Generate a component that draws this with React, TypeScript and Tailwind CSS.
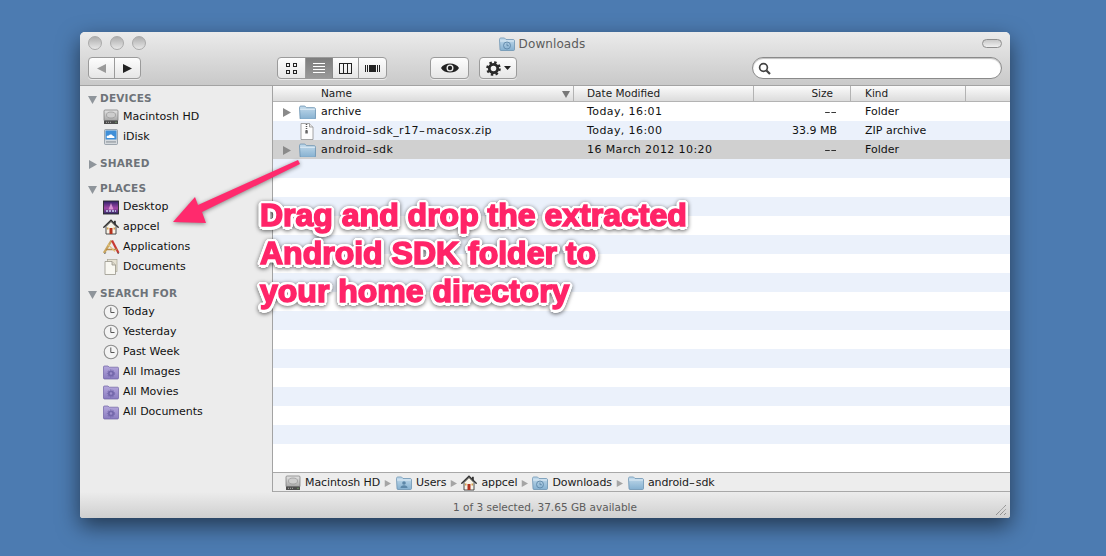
import React from "react";

const Folder = ({ size = 16, glyph }: { size?: number; glyph?: "clock" | "user" }) => (
  <svg width={size} height={size * 14 / 16} viewBox="0 0 16 14" className="shrink-0">
    <defs>
      <linearGradient id="fg" x1="0" y1="0" x2="0" y2="1">
        <stop offset="0" stopColor="#c3dbec" />
        <stop offset="1" stopColor="#85b0d0" />
      </linearGradient>
    </defs>
    <path d="M.5 2.500c0-1 .5-1.500 1.500-1.500h3.500l1.500 1.500h7c1 0 1.500.5 1.500 1.500v8.500c0 .6-.4 1-1 1h-12.500c-.6 0-1-.4-1-1z" fill="url(#fg)" stroke="#6d94b2" strokeWidth=".8" />
    <path d="M1 4h14" stroke="#e8f2f9" strokeWidth=".8" />
    {glyph === "clock" && <g fill="none" stroke="#5d87a8" strokeWidth=".9"><circle cx="8" cy="8.500" r="3.500" /><path d="M8 6.500v2.200h1.800" /></g>}
    {glyph === "user" && <g fill="#5d87a8"><circle cx="8" cy="7" r="1.800" /><path d="M4.500 12c0-2 1.500-2.800 3.500-2.800s3.500.8 3.500 2.800z" /></g>}
  </svg>
);

const Drive = () => (
  <svg width="16" height="16" viewBox="0 0 16 16" className="shrink-0">
    <defs>
      <linearGradient id="dg" x1="0" y1="0" x2="0" y2="1">
        <stop offset="0" stopColor="#e4e4e4" />
        <stop offset="1" stopColor="#a5a5a5" />
      </linearGradient>
    </defs>
    <rect x="1" y="1" width="14" height="11" rx="1" fill="url(#dg)" stroke="#777" strokeWidth=".7" />
    <ellipse cx="8" cy="6" rx="4.500" ry="3" fill="#cdcdcd" stroke="#8b8b8b" strokeWidth=".6" />
    <rect x="1" y="11.500" width="14" height="3.500" rx=".6" fill="#4d4d4d" />
    <path d="M3 13.300h1M5 13.300h1M7 13.300h1" stroke="#c7c7c7" strokeWidth=".8" />
    <path d="M12.500 13.300h1" stroke="#8fdc7e" strokeWidth=".9" />
  </svg>
);

const IDisk = () => (
  <svg width="16" height="16" viewBox="0 0 16 16" className="shrink-0">
    <rect x="1.500" y=".5" width="13" height="15" rx="1" fill="#d5d9dd" stroke="#7f8b96" strokeWidth=".7" />
    <rect x="2.500" y="1.500" width="11" height="9" fill="#3f8fd8" />
    <path d="M4 9c-1.200-1.600.6-3 1.800-2.300.6-1.800 3.800-1.600 4.100.4 1.500-.1 2.100 1.100 1.300 1.900z" fill="#fff" />
    <rect x="3" y="12" width="10" height="1.800" fill="#a8aeb4" />
  </svg>
);

const Desktop = () => (
  <svg width="16" height="15" viewBox="0 0 16 15" className="shrink-0">
    <defs>
      <linearGradient id="dk" x1="0" y1="0" x2="0" y2="1">
        <stop offset="0" stopColor="#2c1f66" />
        <stop offset=".55" stopColor="#a348a8" />
        <stop offset="1" stopColor="#2e2a63" />
      </linearGradient>
    </defs>
    <rect x=".5" y="1" width="15" height="13" fill="url(#dk)" stroke="#2a2a2a" strokeWidth=".9" />
    <path d="M8 3l2.500 6.500h-5z" fill="#e9a9de" opacity=".8" />
    <path d="M3 11h10" stroke="#c9d5f5" strokeWidth="1.600" strokeDasharray="2 1" />
  </svg>
);

const Home = () => (
  <svg width="16" height="16" viewBox="0 0 16 16" className="shrink-0">
    <path d="M3 7.500v7.500h10v-7.500L8 2.500z" fill="#f7f3e8" stroke="#3a3a3a" strokeWidth=".9" />
    <path d="M.8 8.300L8 1.200l7.200 7.100" fill="none" stroke="#333" strokeWidth="1.400" strokeLinecap="round" />
    <rect x="11" y="1.800" width="1.800" height="3.500" fill="#333" />
    <rect x="6.500" y="9" width="3" height="6" fill="#b3331e" />
    <rect x="4" y="8.500" width="1.500" height="2" fill="#d6a24a" />
    <rect x="10.500" y="8.500" width="1.500" height="2" fill="#d6a24a" />
  </svg>
);

const Apps = () => (
  <svg width="17" height="16" viewBox="0 0 17 16" className="shrink-0">
    <path d="M1 14L8.500 1.500" stroke="#c8a661" strokeWidth="2.400" />
    <path d="M9 1.500L15.500 14" stroke="#c83a32" strokeWidth="2.200" />
    <path d="M3 10.500h11" stroke="#b98a4a" strokeWidth="1.700" />
    <path d="M1.500 15l1.200-1.500M15.500 15l-.8-1.500" stroke="#555" strokeWidth="1" />
    <path d="M5 5.500l7 7" stroke="#e3c37c" strokeWidth="1.100" />
  </svg>
);

const Doc = () => (
  <svg width="14" height="16" viewBox="0 0 14 16" className="shrink-0">
    <rect x="3.500" y=".5" width="9.500" height="12" fill="#e5e1d2" stroke="#a8a594" strokeWidth=".7" />
    <path d="M1 2.500h7l3.500 3.500v9.500H1z" fill="#f8f7f1" stroke="#98968a" strokeWidth=".8" />
    <path d="M8 2.500V6h3.500" fill="#d9d6c7" stroke="#98968a" strokeWidth=".8" />
  </svg>
);

const Clock = () => (
  <svg width="16" height="16" viewBox="0 0 16 16" className="shrink-0">
    <circle cx="8" cy="8" r="6.800" fill="#f3f3f3" stroke="#8d8d8d" strokeWidth="1.100" />
    <path d="M7.800 3.500v5h3.700" fill="none" stroke="#555" strokeWidth="1" />
  </svg>
);

const SmartFolder = () => (
  <svg width="16" height="15" viewBox="0 0 16 15" className="shrink-0">
    <defs>
      <linearGradient id="sf" x1="0" y1="0" x2="0" y2="1">
        <stop offset="0" stopColor="#b5a8dc" />
        <stop offset="1" stopColor="#8a7cc0" />
      </linearGradient>
    </defs>
    <path d="M.5 2c0-.7.4-1 1-1h3.500l1.200 1.200h8.300c.7 0 1 .3 1 1v9.800c0 .6-.4 1-1 1h-13c-.6 0-1-.4-1-1z" fill="url(#sf)" stroke="#6f62a5" strokeWidth=".7" />
    <circle cx="8" cy="8.500" r="2.200" fill="none" stroke="#7468ab" strokeWidth="1.800" />
    <circle cx="8" cy="8.500" r="3.600" fill="none" stroke="#7468ab" strokeWidth="1" strokeDasharray="1.300 1.300" />
  </svg>
);

const Zip = () => (
  <svg width="14" height="17" viewBox="0 0 14 17" className="shrink-0">
    <path d="M1 .5h8.500l3.500 3.500v12.500H1z" fill="#fdfdfd" stroke="#8f8f8f" strokeWidth=".8" />
    <path d="M9.500.5V4H13" fill="#e4e4e4" stroke="#8f8f8f" strokeWidth=".8" />
    <path d="M6.500 1v7" stroke="#555" strokeWidth="1.500" strokeDasharray="1 1" />
    <rect x="5.300" y="7.500" width="2.500" height="3" fill="#666" />
  </svg>
);

const Tri = ({ dir, className }: { dir: "down" | "right"; className?: string }) => (
  <svg width="9" height="9" viewBox="0 0 9 9" className={className}>
    <path d={dir === "down" ? "M0 1h9L4.500 9z" : "M1 0l8 4.500L1 9z"} fill="currentColor" />
  </svg>
);

// Lucida's hyphen is much wider than DejaVu's: stretch each one.
const Hy = ({ text }: { text: string }) => (
  <>
    {text.split(/(-)/).map((part, i) =>
      part === "-" ? (
        <span key={i} className="mx-[1.500px] inline-block scale-x-[1.6]">-</span>
      ) : (
        <React.Fragment key={i}>{part}</React.Fragment>
      )
    )}
  </>
);

const groups = [
  { title: "DEVICES", open: true, items: [["Macintosh HD", <Drive />], ["iDisk", <IDisk />]] },
  { title: "SHARED", open: false, items: [] },
  { title: "PLACES", open: true, items: [["Desktop", <Desktop />], ["appcel", <Home />], ["Applications", <Apps />], ["Documents", <Doc />]] },
  {
    title: "SEARCH FOR", open: true, items: [["Today", <Clock />], ["Yesterday", <Clock />], ["Past Week", <Clock />],
    ["All Images", <SmartFolder />], ["All Movies", <SmartFolder />], ["All Documents", <SmartFolder />]],
  },
] as { title: string; open: boolean; items: [string, React.ReactNode][] }[];

const rows = [
  { name: "archive", date: "Today, 16:01", size: "--", kind: "Folder", type: "folder", bg: "bg-white", nameCls: "" },
  { name: "android-sdk_r17-macosx.zip", date: "Today, 16:00", size: "33.9 MB", kind: "ZIP archive", type: "zip", bg: "bg-[#ebf1fb]", nameCls: "tracking-[0.4px]" },
  { name: "android-sdk", date: "16 March 2012 10:20", size: "--", kind: "Folder", type: "folder", bg: "bg-[#d0d0d0]", nameCls: "tracking-[0.4px]" },
];

const stripes = Array.from({ length: 16 }, (_, i) => i);
const cols = "grid grid-cols-[300px_180px_97px_115px_1fr]";

const PathItem = ({ icon, label, last, tight }: { icon: React.ReactNode; label: string; last?: boolean; tight?: boolean }) => (
  <div className="flex items-center">
    <span className="flex w-[16px] justify-center">{icon}</span>
    <span className="ml-[4px] text-[#1a1a1a] tracking-[-0.1px]"><Hy text={label} /></span>
    {!last && <Tri dir="right" className={`ml-[4px] h-[7px] w-[7px] text-[#a5a5a5] ${tight ? "mr-[4px]" : "mr-[5px]"}`} />}
  </div>
);

const btn = "border border-[#9b9b9b] bg-gradient-to-b from-[#fdfdfd] to-[#e6e6e6] shadow-[0_1px_0_rgba(255,255,255,0.6)]";

export default function App() {
  return (
    <div
      className="relative h-[556px] w-[1106px] overflow-hidden bg-[#4c7bb1] pl-[80px] pt-[32px] text-[11px] antialiased"
      style={{ fontFamily: '"DejaVu Sans", sans-serif' }}
    >
      <div className="flex h-[486px] w-[930px] flex-col overflow-hidden rounded-t-[5px] rounded-b-[3px] bg-[#ededed] shadow-[0_8px_22px_rgba(0,0,0,0.55)]">
        {/* Toolbar */}
        <div className="h-[54px] shrink-0 border-b border-[#a3a3a3] bg-gradient-to-b from-[#ebebeb] to-[#c9c9c9]">
          <div className="relative flex h-[25px] items-center justify-center pb-[2px] pr-[6px]">
            <div className="absolute left-[8px] top-[4px] flex gap-[8px]">
              {[0, 1, 2].map((i) => (
                <span key={i} className="h-[14px] w-[14px] rounded-full border border-[#a9a9a9] bg-gradient-to-b from-[#aeaeae] to-[#e8e8e8]" />
              ))}
            </div>
            <Folder glyph="clock" />
            <span className="ml-[4px] text-[12px] text-[#5c5c5c] tracking-[0.1px]">Downloads</span>
            <span className="absolute right-[8px] top-[7px] h-[9px] w-[20px] rounded-full border border-[#8f8f8f] bg-gradient-to-b from-[#c8c8c8] to-[#f0f0f0]" />
          </div>
          <div className="flex h-[22px] items-stretch pl-[8px] pr-[8px]">
            <div className={`flex w-[53px] rounded-[4px] ${btn}`}>
              <div className="flex w-[26px] items-center justify-center border-r border-[#9b9b9b]">
                <svg width="9" height="9" viewBox="0 0 9 9"><path d="M9 0v9L0 4.500z" fill="#9a9a9a" /></svg>
              </div>
              <div className="flex flex-1 items-center justify-center">
                <svg width="9" height="9" viewBox="0 0 9 9"><path d="M0 0v9l9-4.500z" fill="#222" /></svg>
              </div>
            </div>
            <div className={`ml-[136px] flex w-[110px] overflow-hidden rounded-[4px] ${btn}`}>
              <div className="flex w-[28px] items-center justify-center border-r border-[#9b9b9b]">
                <svg width="11" height="11" viewBox="0 0 11 11" fill="none" stroke="#222"><rect x=".5" y=".5" width="3" height="3" /><rect x="7.500" y=".5" width="3" height="3" /><rect x="7.500" y="7.500" width="3" height="3" /><rect x=".5" y="7.500" width="3" height="3" /></svg>
              </div>
              <div className="flex w-[27px] items-center justify-center border-r border-[#8a8a8a] bg-gradient-to-b from-[#7d7d7d] to-[#999999]">
                <svg width="12" height="12" viewBox="0 0 12 12" stroke="#fff"><path d="M0 1.500h12M0 4.500h12M0 7.500h12M0 10.500h12" /></svg>
              </div>
              <div className="flex w-[26px] items-center justify-center border-r border-[#9b9b9b]">
                <svg width="13" height="11" viewBox="0 0 13 11" fill="none" stroke="#222"><rect x=".5" y=".5" width="12" height="10" /><path d="M4.500 .5v10M8.500 .5v10" /></svg>
              </div>
              <div className="flex flex-1 items-center justify-center">
                <svg width="15" height="9" viewBox="0 0 15 9"><path d="M.5 1v7M14.500 1v7M2.500 1v7" stroke="#222" /><rect x="4" y="1" width="7" height="7" fill="#222" /><path d="M12.500 1v7" stroke="#222" /></svg>
              </div>
            </div>
            <div className={`ml-[43px] flex w-[39px] items-center justify-center rounded-[4px] ${btn}`}>
              <svg width="18" height="10" viewBox="0 0 18 10"><path d="M0 5c3-6 15-6 18 0-3 6-15 6-18 0z" fill="#222" /><circle cx="9" cy="5" r="3.500" fill="#eee" /><circle cx="9" cy="5" r="2.200" fill="#222" /></svg>
            </div>
            <div className={`ml-[10px] flex w-[38px] items-center justify-center gap-[3px] rounded-[4px] ${btn}`}>
              <svg width="15" height="15" viewBox="0 0 15 15"><circle cx="7.500" cy="7.500" r="4.200" fill="none" stroke="#2a2a2a" strokeWidth="2.800" /><circle cx="7.500" cy="7.500" r="6" fill="none" stroke="#2a2a2a" strokeWidth="2.600" strokeDasharray="2.400 2.300" /></svg>
              <svg width="7" height="4" viewBox="0 0 7 4"><path d="M0 0h7L3.500 4z" fill="#222" /></svg>
            </div>
            <div className="ml-auto flex w-[250px] items-center rounded-full border border-[#8a8a8a] bg-white pl-[5px] shadow-[inset_0_1px_1px_rgba(0,0,0,0.25)]">
              <svg width="13" height="13" viewBox="0 0 13 13" fill="none" stroke="#444"><circle cx="5.500" cy="5.500" r="3.900" strokeWidth="1.700" /><path d="M8.500 8.500l3.500 3.500" strokeWidth="2.200" /></svg>
            </div>
          </div>
        </div>

        {/* Body */}
        <div className="flex min-h-0 flex-1">
          <aside className="w-[193px] shrink-0 border-r border-[#a3a3a3] bg-[#ececec] pt-[5px]">
            {groups.map((g) => (
              <section key={g.title} className="mb-[9px]">
                <div className="flex h-[16px] items-center pl-[8px] font-bold text-[#6e7379] tracking-[0.2px]">
                  <Tri dir={g.open ? "down" : "right"} className="text-[#8f959b]" />
                  <span className="ml-[3px] text-[10.500px]">{g.title}</span>
                </div>
                {g.items.map(([label, icon]) => (
                  <div key={label} className="flex h-[20px] items-center pl-[23px] text-[#111]">
                    <span className="flex w-[16px] justify-center">{icon}</span>
                    <span className="ml-[4px]">{label}</span>
                  </div>
                ))}
              </section>
            ))}
          </aside>

          <main className="flex min-w-0 flex-1 flex-col bg-white">
            <div className="grid h-[16px] shrink-0 grid-cols-[301px_180px_97px_115px_1fr] border-b border-[#b3b3b3] bg-gradient-to-b from-[#fbfbfb] to-[#dcdcdc] text-[10.500px] leading-[15px] text-[#1c1c1c]">
              <div className="relative border-r border-[#b3b3b3] pl-[48px]">
                Name
                <svg width="8" height="7" viewBox="0 0 8 7" className="absolute right-[3px] top-[5px]"><path d="M0 0h8L4 7z" fill="#777" /></svg>
              </div>
              <div className="border-r border-[#b3b3b3] pl-[13px]">Date Modified</div>
              <div className="border-r border-[#b3b3b3] pr-[17px] text-right">Size</div>
              <div className="border-r border-[#b3b3b3] pl-[14px]">Kind</div>
              <div />
            </div>
            <div className="min-h-0 flex-1 overflow-hidden">
              {rows.map((r) => (
                <div key={r.name} className={`${cols} h-[19px] items-center pt-[1px] ${r.bg} text-[#111]`}>
                  <div className="flex items-center">
                    <span className="flex w-[24px] justify-start pl-[9px]">
                      {r.type === "folder" && <Tri dir="right" className="text-[#8a8a8a]" />}
                    </span>
                    <span className="flex w-[20px] justify-center">{r.type === "folder" ? <Folder size={17} /> : <Zip />}</span>
                    <span className={`ml-[4px] ${r.nameCls}`}><Hy text={r.name} /></span>
                  </div>
                  <div className="pl-[14px] tracking-[0.4px]">{r.date}</div>
                  <div className="pr-[13px] text-right">
                    {r.size === "--" ? <span className="inline-block origin-right scale-x-[1.6]">--</span> : r.size}
                  </div>
                  <div className="pl-[15px]">{r.kind}</div>
                  <div />
                </div>
              ))}
              {stripes.map((i) => (
                <div key={i} className={`h-[19px] ${i % 2 === 0 ? "bg-[#ebf1fb]" : "bg-white"}`} />
              ))}
            </div>
            <div className="flex h-[20px] shrink-0 items-center border-y border-[#a8a8a8] bg-[#ededed] pl-[12px] pt-[2px] text-[#111]">
              <PathItem icon={<Drive />} label="Macintosh HD" />
              <PathItem icon={<Folder glyph="user" />} label="Users" tight />
              <PathItem icon={<Home />} label="appcel" tight />
              <PathItem icon={<Folder glyph="clock" />} label="Downloads" />
              <PathItem icon={<Folder />} label="android-sdk" last />
            </div>
          </main>
        </div>

        {/* Status bar */}
        <div className="relative flex h-[26px] shrink-0 items-center justify-center bg-gradient-to-b from-[#ececec] to-[#cfcfcf] pt-[5px] text-[10.500px] text-[#5c5c5c]">
          1 of 3 selected, 37.65 GB available
          <svg width="12" height="12" viewBox="0 0 12 12" className="absolute bottom-[2px] right-[3px]" stroke="#777" strokeDasharray="1 .6"><path d="M1 11L11 1M5 11l6-6M9 11l2-2" /></svg>
        </div>
      </div>

      {/* Annotation overlay */}
      <svg width="1106" height="556" viewBox="0 0 1106 556" className="pointer-events-none absolute left-0 top-0 drop-shadow-[0_1px_2px_rgba(0,0,0,0.45)]">
        <path d="M173 222L195 197L198 205L298 160L300 164L202 212L206 223z" fill="#ff2a6d" />
      </svg>
      <div
        className="absolute left-[260px] top-[196px] whitespace-nowrap font-bold text-[32px] leading-[38px] text-[#ff2468] drop-shadow-[0_1px_2px_rgba(0,0,0,0.6)] [-webkit-text-stroke:1.600px_#ff2468] [text-shadow:3.500px_0_0_#fff,-3.500px_0_0_#fff,0_3.500px_0_#fff,0_-3.500px_0_#fff,2.500px_2.500px_0_#fff,-2.500px_2.500px_0_#fff,2.500px_-2.500px_0_#fff,-2.500px_-2.500px_0_#fff,3.200px_1.400px_0_#fff,-3.200px_1.400px_0_#fff,3.200px_-1.400px_0_#fff,-3.200px_-1.400px_0_#fff,1.400px_3.200px_0_#fff,-1.400px_3.200px_0_#fff,1.400px_-3.200px_0_#fff,-1.400px_-3.200px_0_#fff]"
        style={{ fontFamily: '"Liberation Sans", Arial, sans-serif' }}
      >
        Drag and drop the extracted
        <br />
        Android SDK folder to
        <br />
        your home directory
      </div>
    </div>
  );
}
